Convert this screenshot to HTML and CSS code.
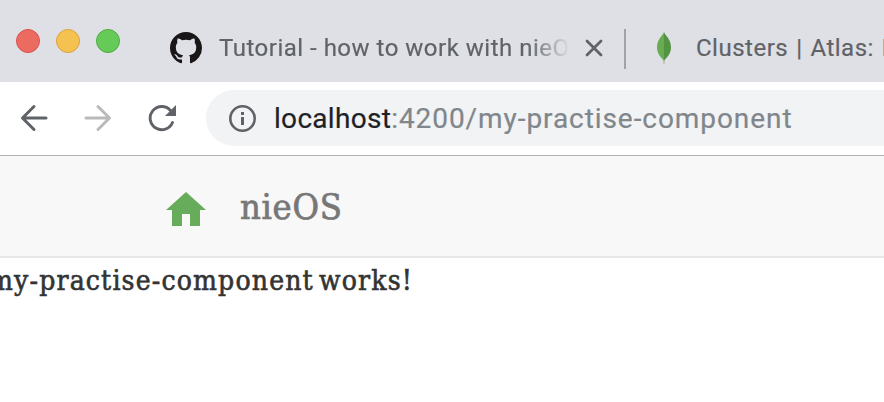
FILE: index.html
```html
<!DOCTYPE html>
<html lang="en">
<head>
<meta charset="utf-8">
<title>nieOS</title>
<link rel="stylesheet" href="styles.css">
</head>
<body>
<div class="tabs">
  <div class="lights"><i class="red"></i><i class="yellow"></i><i class="green"></i></div>
  <svg class="github" viewBox="0 0 16 16"><path fill="#181617" d="M8 0C3.58 0 0 3.58 0 8c0 3.54 2.29 6.53 5.47 7.59.4.07.55-.17.55-.38 0-.19-.01-.82-.01-1.49-2.01.37-2.53-.49-2.69-.94-.09-.23-.48-.94-.82-1.13-.28-.15-.68-.52-.01-.53.63-.01 1.08.58 1.23.82.72 1.21 1.87.87 2.33.66.07-.52.28-.87.51-1.07-1.78-.2-3.64-.89-3.64-3.95 0-.87.31-1.59.82-2.15-.08-.2-.36-1.02.08-2.12 0 0 .67-.21 2.2.82.64-.18 1.32-.27 2-.27s1.36.09 2 .27c1.53-1.04 2.2-.82 2.2-.82.44 1.1.16 1.92.08 2.12.51.56.82 1.27.82 2.15 0 3.07-1.87 3.75-3.65 3.95.29.25.54.73.54 1.48 0 1.07-.01 1.93-.01 2.2 0 .21.15.46.55.38A8.01 8.01 0 0 0 16 8c0-4.42-3.58-8-8-8z"/></svg>
  <span class="title first">Tutorial - how to work with nieO</span>
  <svg class="close" viewBox="0 0 18 18"><path d="M2 2l14 14M16 2L2 16" stroke="#5f6368" stroke-width="2.8" stroke-linecap="round"/></svg>
  <span class="divider"></span>
  <svg class="leaf" viewBox="0 0 16 32"><path fill="#b9b59f" d="M7 27h2l-.5 5h-1z"/><path fill="#68ab50" d="M8 0C6.500 4 1 7 1 15.500c0 6 3.500 9.500 7 13z"/><path fill="#529442" d="M8 0c1.500 4 7 7 7 15.500 0 6-3.500 9.500-7 13z"/></svg>
  <span class="title second">Clusters | Atlas: M</span>
</div>
<div class="toolbar">
  <svg class="back" viewBox="0 0 28 28"><path d="M26 14H2.500M14 2.500L2.500 14 14 25.500" fill="none" stroke="#5f6368" stroke-width="3" stroke-linecap="round" stroke-linejoin="round"/></svg>
  <svg class="forward" viewBox="0 0 28 28"><path d="M2 14h23.500M14 2.500L25.500 14 14 25.500" fill="none" stroke="#bababa" stroke-width="3" stroke-linecap="round" stroke-linejoin="round"/></svg>
  <svg class="reload" viewBox="0 0 28 28"><path d="M24.500 18.500A11.600 11.600 0 1 1 22.500 6.500" fill="none" stroke="#5f6368" stroke-width="2.900" stroke-linecap="round"/><path d="M28 1v11H17z" fill="#5f6368"/></svg>
  <div class="address">
    <svg class="info" viewBox="0 0 28 28"><circle cx="14.500" cy="14.500" r="12.200" fill="none" stroke="#5f6368" stroke-width="2.600"/><path fill="#5f6368" d="M13 8h3v3h-3zM13 13h3v8h-3z"/></svg>
    <span class="url"><b>localhost</b>:4200/my-practise-component</span>
  </div>
</div>
<header class="navbar">
  <svg class="home" viewBox="0 0 40 34"><path fill="#67ac5b" d="M20 0l20 18h-6v16H24V22h-8v12H6V18H0z"/></svg>
  <span class="brand">nieOS</span>
</header>
<p class="works">my-practise-component works!</p>
</body>
</html>
```
FILE: styles.css
```css
* { box-sizing: border-box; }
body { margin: 0; width: 884px; height: 402px; overflow: hidden; background: #fff; font-family: Roboto, sans-serif; }
svg { display: block; flex: none; }
.tabs { display: flex; align-items: center; height: 82px; padding: 13px 0 0 16px; background: #dfe0e5; overflow: hidden; }
.lights { display: flex; gap: 16px; width: 154px; flex: none; margin-top: -13px; }
.lights i { width: 24px; height: 24px; border-radius: 50%; border: 1px solid transparent; }
.lights .red { background: #ec6b60; border-color: #d6524a; }
.lights .yellow { background: #f5c151; border-color: #d8a243; }
.lights .green { background: #65ca57; border-color: #4dab3f; }
.github { width: 32px; height: 32px; }
.title { flex: none; font-size: 24px; line-height: 32px; color: #5f6368; white-space: nowrap; overflow: hidden; -webkit-text-stroke: 0.2px; }
.first { width: 351px; margin-left: 17px; letter-spacing: 0.5px; -webkit-mask-image: linear-gradient(to right, #000 308px, transparent 351px); mask-image: linear-gradient(to right, #000 308px, transparent 351px); }
.close { width: 18px; height: 18px; margin-left: 15px; }
.divider { flex: none; width: 2px; height: 40px; margin: 2px 0 0 21px; background: #a2a3a7; }
.leaf { width: 16px; height: 32px; margin-left: 30px; }
.second { margin-left: 24px; letter-spacing: 0.5px; word-spacing: 1.5px; }
.toolbar { display: flex; align-items: center; height: 74px; padding: 0 0 1px 20px; border-bottom: 1px solid #b2b1b4; }
.back { width: 28px; height: 28px; }
.forward { width: 28px; height: 28px; margin-left: 36px; }
.reload { width: 28px; height: 28px; margin-left: 36px; }
.address { display: flex; align-items: center; flex: 1; height: 56px; margin-left: 30px; padding-left: 22px; border-radius: 28px 0 0 28px; background: #f1f3f4; }
.info { width: 28px; height: 28px; }
.url { margin-left: 18px; font-size: 28px; letter-spacing: 0.93px; color: #80868b; white-space: nowrap; -webkit-text-stroke: 0.2px; }
.url b { font-weight: 400; letter-spacing: 0.3px; color: #202124; }
.navbar { display: flex; align-items: center; height: 102px; padding: 6px 0 0 166px; background: #f8f8f8; border-bottom: 2px solid #e7e7e7; }
.home { width: 40px; height: 34px; }
.brand { margin-left: 34px; margin-top: -5px; font: 36px/48px "Roboto Slab", "DejaVu Serif Condensed", "DejaVu Serif", serif; font-stretch: condensed; letter-spacing: 0.7px; color: #777; -webkit-text-stroke: 0.7px; }
.works { margin: 3px 0 0 -11px; font: 28px/40px "Roboto Slab", "DejaVu Serif Condensed", "DejaVu Serif", serif; font-stretch: condensed; letter-spacing: 1.17px; word-spacing: -4px; color: #333; white-space: nowrap; -webkit-text-stroke: 0.6px; }
```
